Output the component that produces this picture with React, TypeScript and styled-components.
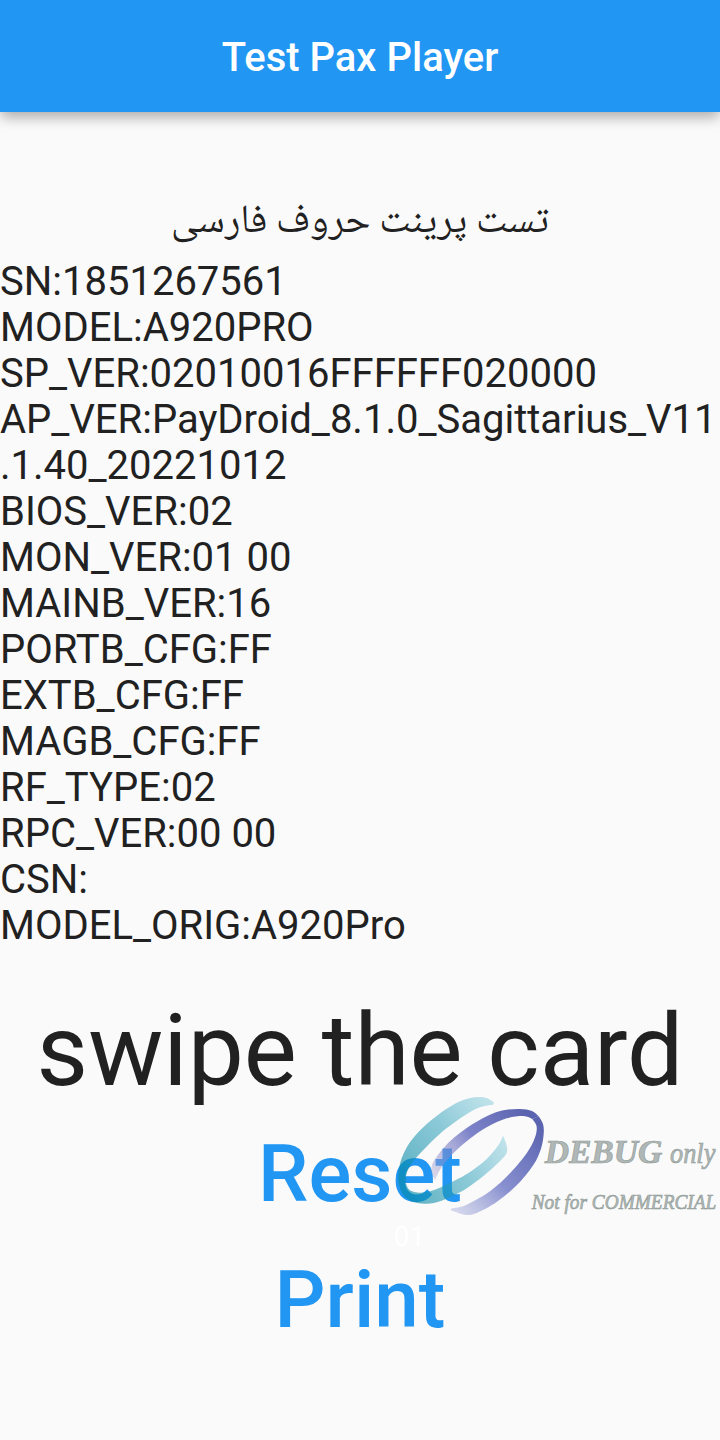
import React from "react";
import styled, { createGlobalStyle } from "styled-components";

const GlobalStyle = createGlobalStyle`
  *, *::before, *::after { box-sizing: border-box; }
  html, body { margin: 0; padding: 0; background: #fafafa; }
  body { font-family: Roboto, sans-serif; color: #212121; }
`;

const Screen = styled.div`
  position: relative;
  width: 720px;
  height: 1440px;
  overflow: hidden;
  display: flex;
  flex-direction: column;
  background: #fafafa;
`;

const AppBar = styled.header`
  flex: none;
  height: 112px;
  display: flex;
  align-items: center;
  justify-content: center;
  padding-top: 4px;
  background: #2196f3;
  box-shadow: 0 6px 13px -1px rgba(0, 0, 0, 0.33);
`;

const Title = styled.h1`
  margin: 0;
  color: #fff;
  font-size: 40px;
  font-weight: 500;
  line-height: 46px;
`;

const Content = styled.main`
  flex: 1;
  display: flex;
  flex-direction: column;
  align-items: center;
  padding-top: 79px;
`;

const PersianLine = styled.p`
  margin: 0;
  height: 68px;
  line-height: 64px;
  font-family: "Noto Naskh Arabic", "Noto Sans Arabic", "DejaVu Sans", sans-serif;
  font-size: 40px;
  white-space: nowrap;
`;

const InfoList = styled.div`
  align-self: stretch;
  font-size: 40px;
  line-height: 46px;
  white-space: nowrap;
`;

const InfoRow = styled.div`
  height: 46px;
`;

const Prompt = styled.p`
  margin: 43px 0 1px;
  font-size: 100px;
  line-height: 118px;
  white-space: nowrap;
`;

const TextButton = styled.button`
  height: 126px;
  padding: 0 16px;
  border: 0;
  background: none;
  color: #2196f3;
  font-family: inherit;
  font-size: 80px;
  font-weight: 500;
  line-height: 94px;
`;

const Watermark = styled.div`
  position: absolute;
  left: 380px;
  top: 1080px;
  width: 340px;
  height: 180px;
  pointer-events: none;
`;

const WatermarkArt = styled.svg`
  display: block;
`;

const info = [
  "SN:1851267561",
  "MODEL:A920PRO",
  "SP_VER:02010016FFFFFF020000",
  "AP_VER:PayDroid_8.1.0_Sagittarius_V11",
  ".1.40_20221012",
  "BIOS_VER:02",
  "MON_VER:01 00",
  "MAINB_VER:16",
  "PORTB_CFG:FF",
  "EXTB_CFG:FF",
  "MAGB_CFG:FF",
  "RF_TYPE:02",
  "RPC_VER:00 00",
  "CSN:",
  "MODEL_ORIG:A920Pro",
];

type Point = [number, number];

// Cubic segments of a Catmull-Rom curve through the given points.
function curve(points: Point[]): string {
  let d = "";
  for (let i = 0; i < points.length - 1; i++) {
    const p0 = points[Math.max(i - 1, 0)];
    const p1 = points[i];
    const p2 = points[i + 1];
    const p3 = points[Math.min(i + 2, points.length - 1)];
    d += ` C${p1[0] + (p2[0] - p0[0]) / 6} ${p1[1] + (p2[1] - p0[1]) / 6}`;
    d += ` ${p2[0] - (p3[0] - p1[0]) / 6} ${p2[1] - (p3[1] - p1[1]) / 6}`;
    d += ` ${p2[0]} ${p2[1]}`;
  }
  return d;
}

// A closed band between an outer edge and the inner edge leading back.
function band(outer: Point[], inner: Point[]): string {
  return `M${outer[0].join(" ")}${curve(outer)} L${inner[0].join(" ")}${curve(inner)} Z`;
}

const tealUpper = band(
  [[342, 67], [320, 54], [292, 51], [250, 60], [200, 86], [140, 132], [92, 184], [65, 235], [55, 280], [55, 310]],
  [[77, 310], [80, 280], [96, 249], [127, 213], [180, 161], [250, 109], [300, 82], [339, 74]]
);
const tealLower = band(
  [[55, 310], [70, 345], [100, 366], [140, 371], [185, 362], [240, 337], [300, 296], [350, 253], [380, 219], [378, 190], [369, 167]],
  [[369, 167], [355, 196], [320, 237], [270, 276], [220, 304], [160, 331], [120, 338], [90, 331], [77, 310]]
);
const indigoUpper = band(
  [[165, 301], [155, 279], [156, 255], [170, 230], [210, 184], [260, 144], [320, 109], [370, 91], [420, 87], [456, 93], [476, 109]],
  [[457, 117], [430, 108], [380, 115], [320, 142], [260, 184], [210, 230], [180, 269], [165, 301]]
);
const indigoLower = band(
  [[476, 109], [489, 132], [491, 162], [483, 206], [460, 255], [410, 316], [350, 366], [290, 399], [260, 405], [235, 399], [213, 391], [216, 385]],
  [[216, 385], [260, 374], [330, 334], [390, 280], [440, 220], [464, 175], [470, 140], [457, 117]]
);

function DebugWatermark() {
  return (
    <Watermark>
      <WatermarkArt width="340" height="180" viewBox="0 0 1020 540">
        <defs>
          <linearGradient id="tealTop" gradientUnits="userSpaceOnUse" x1="340" y1="60" x2="90" y2="290">
            <stop offset="0" stopColor="#8acddb" stopOpacity="0.5" />
            <stop offset="0.5" stopColor="#3aa5be" stopOpacity="0.58" />
            <stop offset="1" stopColor="#078aa5" stopOpacity="0.62" />
          </linearGradient>
          <linearGradient id="tealBottom" gradientUnits="userSpaceOnUse" x1="385" y1="180" x2="100" y2="350">
            <stop offset="0" stopColor="#8acddb" stopOpacity="0.5" />
            <stop offset="0.5" stopColor="#3aa5be" stopOpacity="0.58" />
            <stop offset="1" stopColor="#078aa5" stopOpacity="0.62" />
          </linearGradient>
          <linearGradient id="indigoTop" gradientUnits="userSpaceOnUse" x1="155" y1="290" x2="430" y2="90">
            <stop offset="0" stopColor="#a9a6d2" stopOpacity="0.4" />
            <stop offset="0.5" stopColor="#5f66bd" stopOpacity="0.8" />
            <stop offset="1" stopColor="#454fa5" stopOpacity="0.88" />
          </linearGradient>
          <linearGradient id="indigoBottom" gradientUnits="userSpaceOnUse" x1="220" y1="400" x2="490" y2="150">
            <stop offset="0" stopColor="#b4b9e0" stopOpacity="0.5" />
            <stop offset="0.45" stopColor="#6e78c6" stopOpacity="0.82" />
            <stop offset="1" stopColor="#454fa5" stopOpacity="0.88" />
          </linearGradient>
        </defs>
        <path fill="url(#tealTop)" d={tealUpper} />
        <path fill="url(#tealBottom)" d={tealLower} />
        <path fill="url(#indigoTop)" d={indigoUpper} />
        <path fill="url(#indigoBottom)" d={indigoLower} />
        <g
          fill="#b0b8b7"
          stroke="#929c99"
          strokeWidth="2"
          fontFamily="'Liberation Serif', serif"
          fontStyle="italic"
        >
          <text x="494" y="249" fontSize="98" fontWeight="700" textLength="353" lengthAdjust="spacingAndGlyphs">DEBUG</text>
          <text x="870" y="249" fontSize="88" textLength="136" lengthAdjust="spacingAndGlyphs">only</text>
          <text x="455" y="387" fontSize="66" textLength="554" lengthAdjust="spacingAndGlyphs">Not for COMMERCIAL</text>
        </g>
        <text x="41" y="498" fontFamily="Roboto, sans-serif" fontSize="84" fill="#fff">01</text>
      </WatermarkArt>
    </Watermark>
  );
}

export default function App() {
  return (
    <>
      <GlobalStyle />
      <Screen>
        <AppBar>
          <Title>Test Pax Player</Title>
        </AppBar>
        <Content>
          <PersianLine dir="rtl" lang="fa">تست پرینت حروف فارسی</PersianLine>
          <InfoList>
            {info.map((line) => (
              <InfoRow key={line}>{line}</InfoRow>
            ))}
          </InfoList>
          <Prompt>swipe the card</Prompt>
          <TextButton type="button">Reset</TextButton>
          <TextButton type="button">Print</TextButton>
        </Content>
        <DebugWatermark />
      </Screen>
    </>
  );
}
